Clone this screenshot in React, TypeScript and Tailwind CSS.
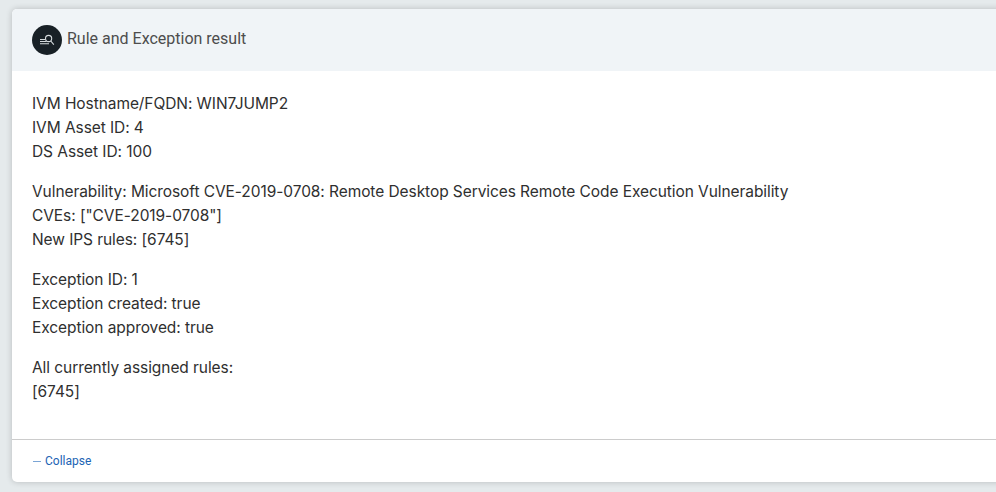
const groups = [
  ["IVM Hostname/FQDN: WIN7JUMP2", "IVM Asset ID: 4", "DS Asset ID: 100"],
  ["Vulnerability: Microsoft CVE-2019-0708: Remote Desktop Services Remote Code Execution Vulnerability", 'CVEs: ["CVE-2019-0708"]', "New IPS rules: [6745]"],
  ["Exception ID: 1", "Exception created: true", "Exception approved: true"],
  ["All currently assigned rules:", "[6745]"],
];

export default function App() {
  return (
    <div className="h-[492px] w-full overflow-hidden bg-[#e5eaec] pt-[9px] pl-3 font-['Roboto',sans-serif]">
      <section className="flex h-[473px] w-[1004px] flex-col overflow-hidden rounded-[5px] bg-white shadow-[0_0_6px_rgba(0,0,0,0.2)]">
        <header className="flex h-[62px] items-center gap-[5px] bg-[#f0f4f7] pl-5">
          <svg width="30" height="30" viewBox="0 0 30 30" fill="none">
            <circle cx="15" cy="15" r="15" fill="#182026" />
            <path d="M8 14.5h5M8 16.5h6.5M8 18.8h9M18.8 16l3 3.6" stroke="#d5dadd" strokeWidth="1.1" />
            <circle cx="16.6" cy="13.5" r="3.1" stroke="#d5dadd" strokeWidth="1.1" />
          </svg>
          <h1 className="pb-[3px] text-[16px] leading-6 text-[#4d4d4d]">Rule and Exception result</h1>
        </header>
        <div className="flex flex-1 flex-col gap-4 pt-[21px] pl-5 font-['Inter',sans-serif] text-[15.5px] leading-6 tracking-[-0.075px] text-[#2f2f2f]">
          {groups.map((lines) => (
            <div key={lines[0]}>
              {lines.map((line) => <p key={line} className="whitespace-nowrap">{line}</p>)}
            </div>
          ))}
        </div>
        <footer className="flex h-[43px] items-center border-t border-[#cccccc] pl-5 text-[12px] text-[#1c64b4]">
          <button className="flex items-center gap-1"><span className="ml-px h-px w-2 bg-[#7ba5d5]" /><span>Collapse</span></button>
        </footer>
      </section>
    </div>
  );
}
